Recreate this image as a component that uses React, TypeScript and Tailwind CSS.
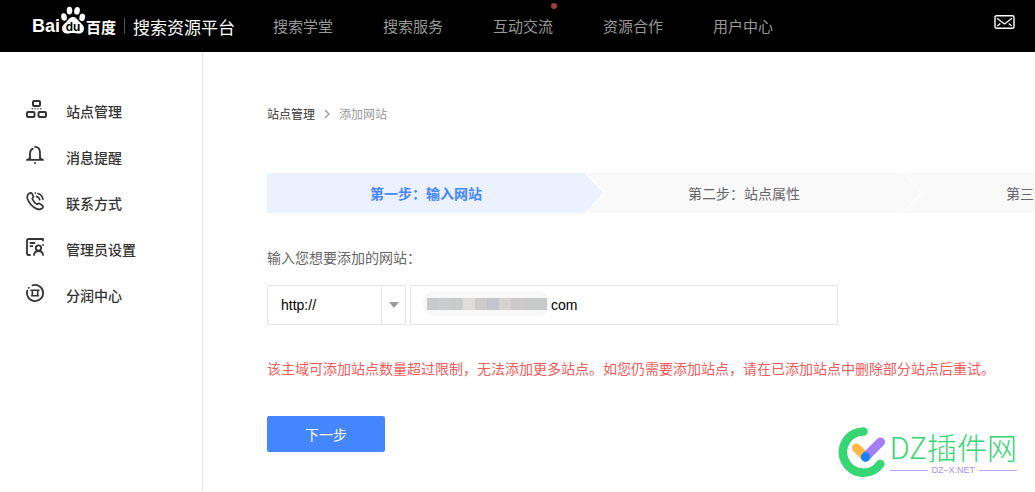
import type { ReactNode } from "react"

const navItems = [
  { label: "搜索学堂" },
  { label: "搜索服务" },
  { label: "互动交流", dot: true },
  { label: "资源合作" },
  { label: "用户中心" },
]

const mosaic = [
  "bg-[#c9c8ca]",
  "bg-[#cbcccd]",
  "bg-[#c9cccb]",
  "bg-[#dfdedb]",
  "bg-[#d0cbcb]",
  "bg-[#c3c4cc]",
  "bg-[#d6d4d3]",
  "bg-[#cdc9cb]",
  "bg-[#c6cbca]",
  "bg-[#c7cac9]",
]

function SideIcon({ children }: { children: ReactNode }) {
  return (
    <svg
      viewBox="0 0 22 20"
      className="mb-1 h-5 w-[22px] shrink-0"
      fill="none"
      stroke="#333"
      strokeWidth="2"
      strokeLinecap="round"
      strokeLinejoin="round"
      aria-hidden="true"
    >
      {children}
    </svg>
  )
}

const sideItems = [
  {
    label: "站点管理",
    icon: (
      <SideIcon>
        <rect x="7" y="2" width="7" height="5" rx="1" />
        <rect x="1" y="13" width="7.5" height="5" rx="1.2" />
        <rect x="12.5" y="13" width="7.5" height="5" rx="1.2" />
        <path d="M6.2 9.8h.1M9 9.8h.1M11.9 9.8h.1M14.8 9.8h.1" strokeWidth="1.4" />
      </SideIcon>
    ),
  },
  {
    label: "消息提醒",
    icon: (
      <SideIcon>
        <path d="M4 14V8.5c0-2.3 1-4 2.8-4.9M9 1.8c3.4 0 5 2.7 5 6.2v6M1 14.8c1.6 0 2.8-1 3-2.6M17 14.8c-1.6 0-2.8-1-3-2.6M1 14.9h16" strokeWidth="1.8" />
        <path d="M9 18h.1" strokeWidth="1.8" />
      </SideIcon>
    ),
  },
  {
    label: "联系方式",
    icon: (
      <SideIcon>
        <path d="M2.6 2.9c1-1.4 2.6-1.5 3.4-.2l1.2 2.1c.6 1-.2 2-1 2.9 1 2.5 2.7 4.4 5 5.7 1-1 2-1.2 2.9-.5l2.2 1.6c1.200.9.9 2.200-.3 3-1.500 1-3.300 1.200-5.200.4C6.400 15.900 2.800 12 1.300 7.300.9 5.500 1.500 4.100 2.600 2.900Z" strokeWidth="1.7" />
        <path d="M9.300 2h.1M12 2.500c2.700.9 4.400 2.900 4.900 5.700M10.500 5.400c1.700.5 2.800 1.600 3.300 3.400" strokeWidth="1.7" />
      </SideIcon>
    ),
  },
  {
    label: "管理员设置",
    icon: (
      <SideIcon>
        <path d="M4 18H2.500Q1 18 1 16.500V3.500Q1 2 2.500 2H17v1.500M17 7.800v.1" strokeWidth="1.800" />
        <path d="M4.500 6h4M4.500 9.200h1.800" strokeWidth="1.800" />
        <circle cx="12.500" cy="11" r="2.700" strokeWidth="1.800" />
        <path d="M8 18c.3-2.500 2.200-4 4.500-4s4.200 1.500 4.500 4" strokeWidth="1.800" />
      </SideIcon>
    ),
  },
  {
    label: "分润中心",
    icon: (
      <SideIcon>
        <path d="M6.500 2.300A8.100 8.100 0 1 1 1.300 7.600M2.800 4.800h.1" strokeWidth="1.800" />
        <path d="M6.300 7.200v5.600h5.400V7.200M5 7.200h8M5.500 12.800h7" strokeWidth="1.600" />
      </SideIcon>
    ),
  },
]

const steps = [
  { label: "第一步：输入网站", active: true },
  { label: "第二步：站点属性", active: false },
  { label: "第三步：验证网站", active: false },
]

function Logo() {
  return (
    <a href="#" className="flex shrink-0 items-center text-white" aria-label="搜索资源平台">
      <span className="font-['Liberation_Sans',sans-serif] text-lg leading-none font-bold">Bai</span>
      <svg viewBox="0 0 26 28" className="mb-3 h-7 w-[26px]" fill="#fff" aria-hidden="true">
        <ellipse cx="4" cy="11" rx="2.8" ry="3.8" transform="rotate(-12 4 11)" />
        <ellipse cx="9.500" cy="4.600" rx="2.800" ry="3.900" />
        <ellipse cx="17" cy="4.800" rx="2.800" ry="3.900" transform="rotate(12 17 4.800)" />
        <ellipse cx="22.200" cy="11.400" rx="2.800" ry="3.800" transform="rotate(12 22.200 11.400)" />
        <path d="M13 11c3.200 0 4.600 2.800 6.800 5 2.200 2 4.200 3.600 4.200 6.500 0 3-2.200 5-5.200 5-2.200 0-3.800-.5-5.800-.5s-3.600.5-5.800.5c-3 0-5.200-2-5.200-5 0-2.900 2-4.500 4.200-6.500 2.200-2.200 3.600-5 6.800-5Z" />
        <text x="13" y="25" textAnchor="middle" fill="#000" fontSize="12" fontWeight="700" fontFamily="Liberation Sans, sans-serif">
          du
        </text>
      </svg>
      <span className="text-[15px] leading-none font-bold">百度</span>
      <span className="mx-2 h-4 w-px bg-[#555]" />
      <span className="text-[17px] leading-none">搜索资源平台</span>
    </a>
  )
}

function Header() {
  return (
    <header className="flex h-[52px] items-center bg-black pr-5 pl-8">
      <Logo />
      <nav className="ml-[38px] flex gap-[50px]">
        {navItems.map((item) => (
          <a key={item.label} href="#" className="relative text-[15px] leading-5 whitespace-nowrap text-[#999]">
            {item.label}
            {item.dot && <span className="absolute -top-[13px] -right-1 size-1.5 rounded-full bg-[#a13a3a]" />}
          </a>
        ))}
      </nav>
      <button type="button" aria-label="消息" className="mb-2 ml-auto">
        <svg viewBox="0 0 21 14" className="h-3.5 w-[21px]" fill="none" stroke="#fff" strokeWidth="1.400" strokeLinejoin="round">
          <rect x="1" y=".8" width="19" height="12.400" rx="1.500" />
          <path d="M3 3.200l5.600 4.300L10.500 9l2-1.500L18 3.200M3.300 11l3-2.500M17.700 11l-3-2.500" strokeWidth="1.200" />
        </svg>
      </button>
    </header>
  )
}

function Steps() {
  return (
    <ol className="flex h-10 overflow-hidden bg-[#f9f9f9]">
      {steps.map((step) => (
        <li
          key={step.label}
          className={`relative flex w-[318px] shrink-0 items-center justify-center text-sm ${
            step.active ? "bg-[#ebf1ff] font-bold text-[#4486fe]" : "text-[#666]"
          }`}
        >
          {step.label}
          <svg viewBox="0 0 20 40" className="absolute top-0 left-full h-10 w-5" aria-hidden="true">
            <path d="M0 0l19 20L0 40" fill={step.active ? "#ebf1ff" : "#f9f9f9"} stroke="#fff" strokeWidth="1" />
          </svg>
        </li>
      ))}
    </ol>
  )
}

function Watermark() {
  return (
    <div className="pointer-events-none absolute right-[18px] bottom-3.5 flex items-center gap-0.5">
      <svg viewBox="0 0 50 52" className="h-[52px] w-[50px]" fill="none" strokeLinecap="round" aria-hidden="true">
        <path d="M25.500 5.500A20.600 20.600 0 1 0 42.300 38" stroke="#35d673" strokeWidth="8.600" />
        <path d="M18.500 22l9 9" stroke="#ffb840" strokeWidth="9" />
        <path d="M27.500 31l15-15" stroke="#a37ffc" strokeWidth="9" />
        <circle cx="27.500" cy="31" r="4.700" fill="#1784ff" />
      </svg>
      <div>
        <p className="text-[30px] leading-9 font-light whitespace-nowrap text-[#35d673]">DZ插件网</p>
        <div className="flex items-center gap-1 text-[9px] leading-3 text-[#a990f5]">
          <span className="h-px flex-1 bg-[#b9a3f8]" />
          <span className="font-['Liberation_Sans',sans-serif]">DZ–X.NET</span>
          <span className="h-px flex-1 bg-[#b9a3f8]" />
        </div>
      </div>
    </div>
  )
}

export default function App() {
  return (
    <div className="relative flex min-h-screen flex-col overflow-hidden bg-white font-['Noto_Sans_CJK_SC',sans-serif] text-[#333]">
      <Header />
      <div className="flex flex-1">
        <aside className="w-[203px] shrink-0 border-r border-[#e8e8e8] pt-9">
          <ul>
            {sideItems.map((item) => (
              <li key={item.label}>
                <a href="#" className="flex h-[46px] items-center gap-[18px] pl-[26px] text-sm font-medium">
                  {item.icon}
                  {item.label}
                </a>
              </li>
            ))}
          </ul>
        </aside>

        <main className="min-w-0 flex-1 pt-[52px] pl-16">
          <nav className="flex items-center text-xs leading-5">
            <a href="#">站点管理</a>
            <svg viewBox="0 0 8 10" className="mx-2 h-2.5 w-2" fill="none" stroke="#999" strokeWidth="1.300" aria-hidden="true">
              <path d="M2 1l4 4-4 4" />
            </svg>
            <span className="text-[#999]">添加网站</span>
          </nav>

          <div className="mt-[49px]">
            <Steps />
          </div>

          <form className="mt-[34px] text-sm leading-5" onSubmit={(e) => e.preventDefault()}>
            <label htmlFor="site" className="block text-[#666]">
              输入您想要添加的网站：
            </label>
            <div className="mt-[18px] flex gap-1 font-['Liberation_Sans',sans-serif] text-black">
              <div className="relative">
                <select
                  aria-label="协议"
                  className="h-10 w-[139px] appearance-none rounded-xs border border-[#e4e4e4] bg-white pl-[13px]"
                >
                  <option>http://</option>
                  <option>https://</option>
                </select>
                <span className="pointer-events-none absolute inset-y-px right-px flex w-6 items-center justify-center border-l border-[#e4e4e4]">
                  <svg viewBox="0 0 10 6" className="h-1.5 w-2.5" fill="#999" aria-hidden="true">
                    <path d="M0 0h10L5 6z" />
                  </svg>
                </span>
              </div>
              <div className="relative w-[428px]">
                <input
                  id="site"
                  type="text"
                  defaultValue="com"
                  className="h-10 w-full rounded-xs border border-[#e4e4e4] pl-[140px]"
                />
                <div className="pointer-events-none absolute top-1.5 left-3 flex h-[25px] w-[129px] items-center rounded-full bg-[#f8f8f8] pl-[5px]">
                  {mosaic.map((color) => (
                    <span key={color} className={`h-3 w-3 ${color}`} />
                  ))}
                </div>
              </div>
            </div>
            <p className="mt-[33px] whitespace-nowrap text-[#f35b5b]">
              该主域可添加站点数量超过限制，无法添加更多站点。如您仍需要添加站点，请在已添加站点中删除部分站点后重试。
            </p>
            <button type="submit" className="mt-[38px] h-9 w-[118px] rounded-xs bg-[#4486fe] text-white">
              下一步
            </button>
          </form>
        </main>
      </div>
      <Watermark />
    </div>
  )
}
